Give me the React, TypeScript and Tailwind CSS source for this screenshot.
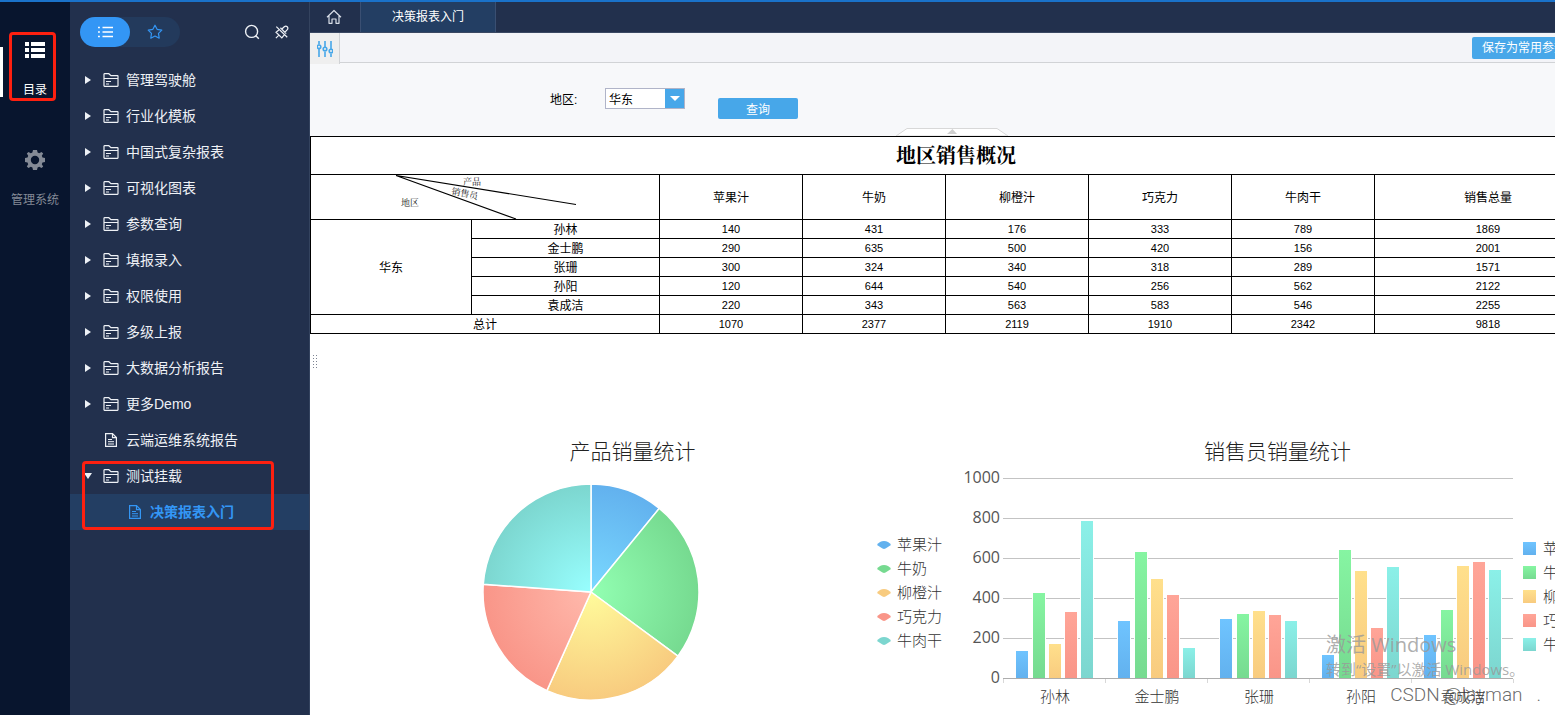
import React from 'react';

const categories = ['苹果汁', '牛奶', '柳橙汁', '巧克力', '牛肉干'];

const salesRows = [
  { name: '孙林', values: [140, 431, 176, 333, 789], total: 1869 },
  { name: '金士鹏', values: [290, 635, 500, 420, 156], total: 2001 },
  { name: '张珊', values: [300, 324, 340, 318, 289], total: 1571 },
  { name: '孙阳', values: [120, 644, 540, 256, 562], total: 2122 },
  { name: '袁成洁', values: [220, 343, 563, 583, 546], total: 2255 },
];

const totals = [1070, 2377, 2119, 1910, 2342];
const grandTotal = 9818;

const palette = [
  { base: '#62b1ee', top: '#6fc4ff', center: '#7ad9ff' },
  { base: '#76da90', top: '#86f5a2', center: '#92ffb2' },
  { base: '#f8cb7f', top: '#ffe08c', center: '#fffb9b' },
  { base: '#f99588', top: '#ffa598', center: '#ffb9ac' },
  { base: '#7cd6cf', top: '#8bf0e8', center: '#98ffff' },
];

const folders = [
  '管理驾驶舱',
  '行业化模板',
  '中国式复杂报表',
  '可视化图表',
  '参数查询',
  '填报录入',
  '权限使用',
  '多级上报',
  '大数据分析报告',
  '更多Demo',
];

const FolderIcon: React.FC = () => (
  <svg width="16" height="14" viewBox="0 0 16 14" fill="none" stroke="currentColor" strokeWidth="1.2">
    <path d="M1 13V1.2Q1 .7 1.5 .7H5.8L8 2.7H14.5Q15 2.7 15 3.2V12.8Q15 13.3 14.5 13.3H1.5Q1 13.3 1 12.8Z" />
    <path d="M1 5.5H15M3 8.5H8M3 11H6" strokeWidth="1" />
  </svg>
);

const FileIcon: React.FC = () => (
  <svg width="14" height="14" viewBox="0 0 14 14" fill="none" stroke="currentColor" strokeWidth="1.2">
    <path d="M1.6 .7H8.5L12.4 4.6V13.3H1.6Z" />
    <path d="M8.5 .7V4.6H12.4" />
    <path d="M4 6.5H8M4 8.7H10M4 11H10" strokeWidth="1" />
  </svg>
);

const ListIcon: React.FC<{ className?: string; bold?: boolean }> = ({ className, bold }) => (
  <svg className={className} viewBox="0 0 20 16" fill="currentColor">
    {[0, 6, 12].map((y) => (
      <g key={y}>
        <rect x="0" y={bold ? y : y + 1} width={bold ? 4 : 2.5} height={bold ? 4 : 2} />
        <rect x="6" y={bold ? y : y + 1} width="14" height={bold ? 4 : 2} />
      </g>
    ))}
  </svg>
);

const Rail: React.FC = () => (
  <nav className="relative w-[70px] shrink-0 bg-[#08152e] pt-[38px]">
    <button type="button" className="flex w-full flex-col items-center text-white">
      <ListIcon bold className="mt-0.5 h-4 w-5" />
      <span className="mt-6 text-xs leading-4">目录</span>
    </button>
    <button type="button" className="mt-[52px] flex w-full flex-col items-center text-[#848a96]">
      <svg width="20" height="20" viewBox="0 0 20 20">
        <path
          fill="currentColor"
          fillRule="evenodd"
          d="M8 0H12L12.6 2.6 14.2 3.3 16.5 1.9 18.2 3.6 16.8 5.8 17.5 7.5 20 8V12L17.5 12.5 16.8 14.2 18.2 16.4 16.5 18.1 14.2 16.7 12.6 17.4 12 20H8L7.4 17.4 5.8 16.7 3.5 18.1 1.8 16.4 3.2 14.2 2.5 12.5 0 12V8L2.5 7.5 3.2 5.8 1.8 3.6 3.5 1.9 5.8 3.3 7.4 2.6ZM10 5.8A4.2 4.2 0 1 0 10 14.2 4.2 4.2 0 1 0 10 5.8Z"
        />
      </svg>
      <span className="mt-[22px] text-xs leading-4">管理系统</span>
    </button>
    <span className="absolute top-[45px] left-0 h-[50px] w-[3px] bg-white" />
    <span className="absolute top-[30px] left-[9px] h-[69px] w-[47px] rounded-sm border-3 border-[#fd2010]" />
  </nav>
);

const Sidebar: React.FC = () => (
  <aside className="w-60 shrink-0 border-r border-[#34435f] bg-[#22304d] text-[#eef1f6]">
    <div className="flex h-15 items-center pr-5 pl-2.5">
      <div className="flex h-[30px] w-[100px] rounded-full bg-[#233a5c]">
        <button type="button" aria-label="目录" className="flex w-[50px] items-center justify-center rounded-full bg-[#3396f5] text-white">
          <ListIcon className="h-3 w-[15px]" />
        </button>
        <button type="button" aria-label="收藏" className="flex w-[50px] items-center justify-center text-[#3396f5]">
          <svg width="16" height="16" viewBox="0 0 16 16" fill="none" stroke="currentColor" strokeWidth="1.2" strokeLinejoin="round">
            <path d="M8 1.2L10.1 5.3 14.8 6.1 11.5 9.4 12.2 14.2 8 12 3.8 14.2 4.5 9.4 1.2 6.1 5.9 5.3Z" />
          </svg>
        </button>
      </div>
      <button type="button" aria-label="搜索" className="ml-auto">
        <svg width="16" height="16" viewBox="0 0 16 16" fill="none" stroke="currentColor" strokeWidth="1.4">
          <circle cx="7.6" cy="7.4" r="6" />
          <path d="M11.8 11.8L14.8 14.8" />
        </svg>
      </button>
      <button type="button" aria-label="取消固定" className="ml-[15px]">
        <svg width="14" height="14" viewBox="0 0 16 16" fill="none" stroke="currentColor" strokeWidth="1.4">
          <path d="M1.5 1.8L14 14M7.6 4.8L10.6 2Q12.4 .6 14 2 15.4 3.6 14 5.4L11.2 8.4M4.4 5.6L1.2 8.2 7.8 14.8 10.4 11.6M4.5 11.5L1 15M6.2 3.2L12.8 9.8" />
        </svg>
      </button>
    </div>

    <div className="relative text-sm">
      <ul>
        {folders.map((name) => (
          <li key={name}>
            <button type="button" className="flex h-9 w-full items-center pl-[15px]">
              <svg width="6" height="8" viewBox="0 0 6 8" fill="currentColor">
                <path d="M0 0L6 4 0 8Z" />
              </svg>
              <span className="mr-[7px] ml-3">
                <FolderIcon />
              </span>
              {name}
            </button>
          </li>
        ))}
        <li>
          <button type="button" className="flex h-9 w-full items-center gap-2 pl-[34px]">
            <FileIcon />
            云端运维系统报告
          </button>
        </li>
        <li>
          <button type="button" className="flex h-9 w-full items-center pl-3.5">
            <svg width="8" height="6" viewBox="0 0 8 6" fill="currentColor">
              <path d="M0 0H8L4 6Z" />
            </svg>
            <span className="mr-[7px] ml-[11px]">
              <FolderIcon />
            </span>
            测试挂载
          </button>
          <button type="button" className="flex h-9 w-full items-center gap-2 bg-[#233e63] pl-[58px] font-bold text-[#3396f5]">
            <FileIcon />
            决策报表入门
          </button>
        </li>
      </ul>
      <span className="pointer-events-none absolute bottom-0 left-3 h-[69px] w-48 rounded-sm border-3 border-[#fd2010]" />
    </div>
  </aside>
);

const TabBar: React.FC = () => (
  <div className="flex h-[31px] border-b border-[#3a4863] bg-[#22304d] text-xs text-white">
    <button type="button" aria-label="首页" className="flex w-[51px] items-center justify-center border-r border-[#3a4f72] pr-0.5">
      <svg width="16" height="16" viewBox="0 0 16 16" fill="none" stroke="#d9dee8" strokeWidth="1.2" strokeLinejoin="round">
        <path d="M1 8.2L8 1.5 15 8.2M3 7V14.3H6V10H10V14.3H13V7" />
      </svg>
    </button>
    <button type="button" className="w-[135px] border-r border-[#3a4f72] bg-[#233e63]">
      决策报表入门
    </button>
  </div>
);

const ParameterPane: React.FC = () => (
  <form className="relative h-[104px] border-b border-black bg-[#f7f8fa]" onSubmit={(e) => e.preventDefault()}>
    <div className="flex h-[30px] min-w-[1292px] border-b border-[#d1d3d6] bg-[#f3f4f8]">
      <button type="button" aria-label="参数设置" className="flex h-[31px] w-[30px] items-center justify-center border-r border-[#d1d3d6] bg-[#efefef]">
        <svg width="16" height="16" viewBox="0 0 16 16" fill="none" stroke="#47a7e9" strokeWidth="1.6">
          <path d="M2 0V3.5M2 8V16M8 0V6M8 10.5V16M14 0V8M14 12.5V16" />
          <circle cx="2" cy="5.8" r="1.8" />
          <circle cx="8" cy="8" r="1.8" />
          <circle cx="14" cy="10" r="1.8" />
        </svg>
      </button>
      <button type="button" className="mt-1 ml-auto h-[22px] w-[130px] rounded-xs bg-[#47a7e9] pl-2.5 text-left text-xs whitespace-nowrap text-white">
        保存为常用参数组合
      </button>
    </div>
    <div className="flex items-start pt-[25px] pl-60 text-xs text-black">
      <label htmlFor="region" className="w-[55px] leading-6">
        地区:
      </label>
      <div className="relative h-[21px] w-20">
        <select id="region" defaultValue="华东" className="h-full w-full appearance-none border border-[#b0b4c8] bg-white pt-0.5 pl-[3px] text-xs">
          <option>华东</option>
          <option>华北</option>
        </select>
        <span className="pointer-events-none absolute top-px right-px flex h-[19px] w-[19px] items-center justify-center bg-[#47a7e9]">
          <svg width="10" height="5" viewBox="0 0 10 5" fill="#fff">
            <path d="M0 0H10L5 5Z" />
          </svg>
        </span>
      </div>
      <button type="submit" className="mt-2.5 ml-[33px] h-[21px] w-20 rounded-xs bg-[#47a7e9] pt-0.5 text-white">
        查询
      </button>
    </div>
    <button type="button" aria-label="收起参数面板" className="absolute bottom-0 left-[585px]">
      <svg className="block" width="114" height="8" viewBox="0 0 114 8">
        <path d="M1 8L12 .5H102L113 8Z" fill="#fff" stroke="#d8d8d8" />
        <path d="M52 6L57.5 1 62 6Z" fill="#cfcfcf" />
      </svg>
    </button>
  </form>
);

const SalesTable: React.FC = () => (
  <table className="w-full table-fixed border-collapse border border-t-0 border-black text-center text-xs text-black">
    <colgroup>
      <col className="w-[161px]" />
      <col className="w-[188px]" />
      {categories.map((name) => (
        <col key={name} className="w-[143px]" />
      ))}
      <col />
    </colgroup>
    <thead>
      <tr className="h-[37px]">
        <th colSpan={8} className="border-b border-black p-0 pt-0.5 font-['Liberation_Serif','Noto_Serif_CJK_SC','Noto_Sans_CJK_SC',serif] text-xl leading-6 font-bold">
          地区销售概况
        </th>
      </tr>
      <tr className="h-[45px]">
        <th colSpan={2} className="border border-black p-0">
          <svg className="block" width="348" height="44" viewBox="0 0 348 44">
            <path d="M85 .5L265 29.5M85 .5L205 44" stroke="#000" strokeWidth="1.1" />
            <g fontSize="9" fill="#222" fontWeight="400" className="font-['Liberation_Serif','Noto_Serif_CJK_SC','Noto_Sans_CJK_SC',serif]">
              <text x="152" y="10">产品</text>
              <text x="90" y="31">地区</text>
              <text x="140" y="19" transform="rotate(12 140 19)">销售员</text>
            </g>
          </svg>
        </th>
        {categories.map((name) => (
          <th key={name} className="border border-black p-0 pt-0.5 font-normal">
            {name}
          </th>
        ))}
        <th className="border border-black p-0 pt-0.5 font-normal">销售总量</th>
      </tr>
    </thead>
    <tbody>
      {salesRows.map((row, index) => (
        <tr key={row.name} className="h-[19px] leading-4">
          {index === 0 && (
            <th rowSpan={5} className="border border-black p-0 pt-0.5 font-normal">
              华东
            </th>
          )}
          <th className="border border-black p-0 pt-0.5 font-normal">{row.name}</th>
          {row.values.map((value, i) => (
            <td key={categories[i]} className="border border-black p-0 text-[11px]">
              {value}
            </td>
          ))}
          <td className="border border-black p-0 text-[11px]">{row.total}</td>
        </tr>
      ))}
      <tr className="h-[19px] leading-4">
        <th colSpan={2} className="border border-black p-0 pt-0.5 font-normal">
          总计
        </th>
        {totals.map((value, i) => (
          <td key={categories[i]} className="border border-black p-0 text-[11px]">
            {value}
          </td>
        ))}
        <td className="border border-black p-0 text-[11px]">{grandTotal}</td>
      </tr>
    </tbody>
  </table>
);

const PIE_CENTER = 109;
const PIE_RADIUS = 108;

const slicePath = (index: number) => {
  const before = totals.slice(0, index).reduce((sum, v) => sum + v, 0);
  const start = (before / grandTotal) * Math.PI * 2;
  const end = ((before + totals[index]) / grandTotal) * Math.PI * 2;
  const point = (angle: number) =>
    `${PIE_CENTER + PIE_RADIUS * Math.sin(angle)} ${PIE_CENTER - PIE_RADIUS * Math.cos(angle)}`;
  return `M${PIE_CENTER} ${PIE_CENTER}L${point(start)}A${PIE_RADIUS} ${PIE_RADIUS} 0 0 1 ${point(end)}Z`;
};

const PieChart: React.FC = () => (
  <section className="min-w-0 flex-1">
    <h2 className="text-center text-[21px] leading-7 font-light text-[#222]">产品销量统计</h2>
    <div className="mt-[17px] flex">
      <div className="flex flex-1 justify-center">
        <svg width="218" height="218" viewBox="0 0 218 218">
          <defs>
            {palette.map((color, i) => (
              <radialGradient key={color.base} id={`slice-${i}`} gradientUnits="userSpaceOnUse" cx={PIE_CENTER} cy={PIE_CENTER} r={PIE_RADIUS}>
                <stop offset="0" stopColor={color.center} />
                <stop offset="1" stopColor={color.base} />
              </radialGradient>
            ))}
          </defs>
          {categories.map((name, i) => (
            <path key={name} d={slicePath(i)} fill={`url(#slice-${i})`} stroke="#fff" strokeWidth="1.5" />
          ))}
        </svg>
      </div>
      <ul className="w-[83px] pt-[50px] pl-[5px] text-[15px] leading-6 font-light text-[#333]">
        {categories.map((name, i) => (
          <li key={name} className="flex items-center gap-1.5">
            <svg className="shrink-0" width="14" height="8" viewBox="0 0 14 8">
              <path d="M0 4C3 -1.2 11 -1.2 14 4L8.5 7.5Q7 8.4 5.5 7.5Z" fill={palette[i].base} />
            </svg>
            {name}
          </li>
        ))}
      </ul>
    </div>
  </section>
);

const GROUP_WIDTH = 102;
const PLOT_LEFT = 48;
const BASELINE = 210;

const BarChart: React.FC = () => (
  <section className="min-w-0 flex-1">
    <h2 className="text-center text-[21px] leading-7 font-light text-[#222]">销售员销量统计</h2>
    <div className="mt-0.5 flex">
      <svg className="shrink-0" width="564" height="244" viewBox="0 0 564 244">
        <defs>
          {palette.map((color, i) => (
            <linearGradient key={color.base} id={`bar-${i}`} x1="0" y1="0" x2="0" y2="1">
              <stop offset="0" stopColor={color.top} />
              <stop offset="1" stopColor={color.base} />
            </linearGradient>
          ))}
        </defs>
        {[0, 200, 400, 600, 800, 1000].map((tick) => (
          <g key={tick}>
            <path d={`M${PLOT_LEFT} ${BASELINE - tick / 5 + 0.5}H558`} stroke="#c3c3c3" />
            <text x="45" y={BASELINE - tick / 5 + 5} textAnchor="end" fontSize="16" fill="#555" className="font-['Open_Sans','Noto_Sans',sans-serif]">
              {tick}
            </text>
          </g>
        ))}
        {salesRows.map((row, g) =>
          row.values.map((value, i) => (
            <rect
              key={`${row.name}-${i}`}
              x={PLOT_LEFT + g * GROUP_WIDTH + 12.5 + Math.ceil(i * 16.25)}
              y={BASELINE - Math.round(value / 5) + 0.5}
              width="13"
              height={Math.round(value / 5)}
              fill={`url(#bar-${i})`}
              stroke="#fff"
            />
          ))
        )}
        <path d={`M${PLOT_LEFT} ${BASELINE + 0.5}H558`} stroke="#adadad" />
        {[0, 1, 2, 3, 4, 5].map((g) => (
          <path key={g} d={`M${PLOT_LEFT + g * GROUP_WIDTH + 0.5} ${BASELINE + 1}v4`} stroke="#d8d8d8" />
        ))}
        {salesRows.map((row, g) => (
          <text key={row.name} x={PLOT_LEFT + (g + 0.5) * GROUP_WIDTH + 1} y={BASELINE + 24} textAnchor="middle" fontSize="15" fontWeight="300" fill="#333">
            {row.name}
          </text>
        ))}
      </svg>
      <ul className="pt-[69px] pl-1 text-[15px] leading-6 font-light whitespace-nowrap text-[#333]">
        {categories.map((name, i) => (
          <li key={name} className="flex items-center gap-[7px]">
            <svg className="shrink-0" width="13" height="13" viewBox="0 0 13 13">
              <rect width="13" height="13" fill={`url(#bar-${i})`} />
            </svg>
            {name}
          </li>
        ))}
      </ul>
    </div>
  </section>
);

const App: React.FC = () => {
  return (
    <div className="relative flex h-screen overflow-hidden border-t-2 border-[#1a72ca] bg-white font-['Liberation_Sans','Noto_Sans_CJK_SC',sans-serif]">
      <Rail />
      <Sidebar />
      <main className="relative min-w-0 flex-1 overflow-hidden">
        <TabBar />
        <ParameterPane />
        <div className="min-w-[1292px]">
          <SalesTable />
          <div className="h-[104px] pt-5 pl-[3px]">
            <svg width="5" height="14" viewBox="0 0 5 14" stroke="#7d8492" strokeDasharray="1 2">
              <path d="M.5 1V14M3.5 1V14" />
            </svg>
          </div>
          <div className="flex pr-0.5">
            <PieChart />
            <BarChart />
          </div>
        </div>
      </main>

      {/* Desktop watermarks */}
      <div className="pointer-events-none absolute right-[29px] bottom-9 w-[200px] font-['Open_Sans','Noto_Sans_CJK_SC',sans-serif] text-[#999]/80">
        <p className="text-xl leading-7 whitespace-nowrap">激活 Windows</p>
        <p className="text-[15px] leading-5 whitespace-nowrap">转到“设置”以激活 Windows。</p>
      </div>
      <p className="pointer-events-none absolute right-[14px] bottom-2 font-['Roboto','Liberation_Sans',sans-serif] text-[19px] leading-6 font-light whitespace-pre text-[#444]/80">
        CSDN @layman{'   '}.
      </p>
    </div>
  );
};

export default App;
